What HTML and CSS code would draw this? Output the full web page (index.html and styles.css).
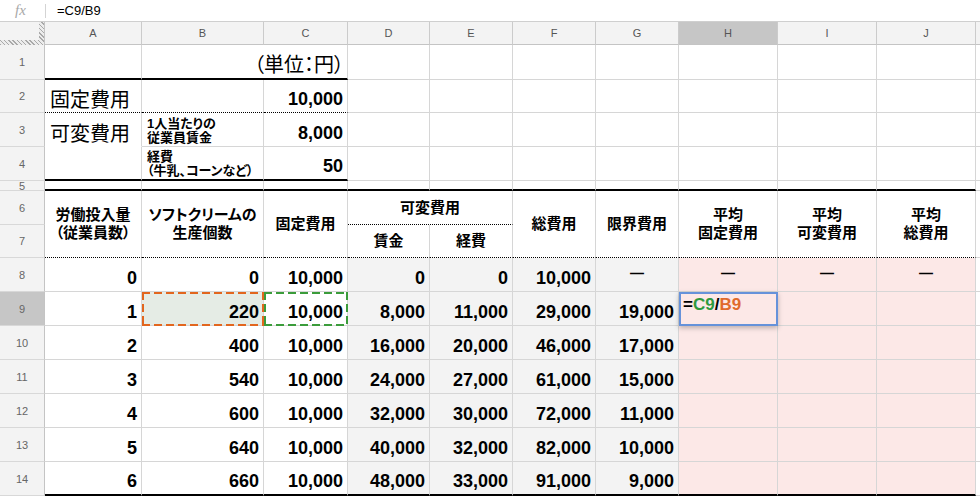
FILE: index.html
```html
<!DOCTYPE html>
<html lang="ja">
<head>
<meta charset="utf-8">
<title>Sheet</title>
<link rel="stylesheet" href="styles.css">
</head>
<body>
<div class="fbar"><span class="fx">fx</span><span class="fsep"></span><span class="ftext">=C9/B9</span></div>
<div class="sheet">
  <div class="corner"></div>
  <div class="ch">A</div><div class="ch">B</div><div class="ch">C</div><div class="ch">D</div><div class="ch">E</div><div class="ch">F</div><div class="ch">G</div><div class="ch sel">H</div><div class="ch">I</div><div class="ch">J</div><div class="ch k"></div>

  <div class="rh">1</div>
  <div class="c bk"></div>
  <div class="c bk cs2 unit">（単位：円）</div>
  <div class="c"></div><div class="c"></div><div class="c"></div><div class="c"></div><div class="c"></div><div class="c"></div><div class="c"></div><div class="c k"></div>

  <div class="rh">2</div>
  <div class="c dt big">固定費用</div>
  <div class="c dt"></div>
  <div class="c dt num">10,000</div>
  <div class="c"></div><div class="c"></div><div class="c"></div><div class="c"></div><div class="c"></div><div class="c"></div><div class="c"></div><div class="c k"></div>

  <div class="rh">3</div>
  <div class="c wb big">可変費用</div>
  <div class="c sm">1人当たりの<br>従業員賃金</div>
  <div class="c num">8,000</div>
  <div class="c"></div><div class="c"></div><div class="c"></div><div class="c"></div><div class="c"></div><div class="c"></div><div class="c"></div><div class="c k"></div>

  <div class="rh">4</div>
  <div class="c bk"></div>
  <div class="c bk sm">経費<br>（牛乳、コーンなど）</div>
  <div class="c bk num">50</div>
  <div class="c"></div><div class="c"></div><div class="c"></div><div class="c"></div><div class="c"></div><div class="c"></div><div class="c"></div><div class="c k"></div>

  <div class="rh r5">5</div>
  <div class="c bk"></div><div class="c bk"></div><div class="c bk"></div><div class="c bk"></div><div class="c bk"></div><div class="c bk"></div><div class="c bk"></div><div class="c bk"></div><div class="c bk"></div><div class="c bk"></div><div class="c k"></div>

  <div class="rh">6</div>
  <div class="c hd rs2 dt">労働投入量<br>（従業員数）</div>
  <div class="c hd rs2 dt">ソフトクリームの<br>生産個数</div>
  <div class="c hd rs2 dt">固定費用</div>
  <div class="c hd cs2 dt">可変費用</div>
  <div class="c hd rs2 dt">総費用</div>
  <div class="c hd rs2 dt">限界費用</div>
  <div class="c hd rs2 dt">平均<br>固定費用</div>
  <div class="c hd rs2 dt">平均<br>可変費用</div>
  <div class="c hd rs2 dt">平均<br>総費用</div>
  <div class="c k rs2"></div>

  <div class="rh">7</div>
  <div class="c hd dt">賃金</div>
  <div class="c hd dt">経費</div>

  <div class="rh">8</div>
  <div class="c num">0</div><div class="c num">0</div><div class="c num">10,000</div>
  <div class="c num g">0</div><div class="c num g">0</div><div class="c num g">10,000</div><div class="c dash g">—</div>
  <div class="c dash p">—</div><div class="c dash p">—</div><div class="c dash p">—</div><div class="c k"></div>

  <div class="rh sel">9</div>
  <div class="c num">1</div><div class="c num refb">220</div><div class="c num refc">10,000</div>
  <div class="c num g">8,000</div><div class="c num g">11,000</div><div class="c num g">29,000</div><div class="c num g">19,000</div>
  <div class="c p edit"><span>=</span><span class="fg">C9</span><span>/</span><span class="fo">B9</span></div><div class="c p"></div><div class="c p"></div><div class="c k"></div>

  <div class="rh">10</div>
  <div class="c num">2</div><div class="c num">400</div><div class="c num">10,000</div>
  <div class="c num g">16,000</div><div class="c num g">20,000</div><div class="c num g">46,000</div><div class="c num g">17,000</div>
  <div class="c p"></div><div class="c p"></div><div class="c p"></div><div class="c k"></div>

  <div class="rh">11</div>
  <div class="c num">3</div><div class="c num">540</div><div class="c num">10,000</div>
  <div class="c num g">24,000</div><div class="c num g">27,000</div><div class="c num g">61,000</div><div class="c num g">15,000</div>
  <div class="c p"></div><div class="c p"></div><div class="c p"></div><div class="c k"></div>

  <div class="rh">12</div>
  <div class="c num">4</div><div class="c num">600</div><div class="c num">10,000</div>
  <div class="c num g">32,000</div><div class="c num g">30,000</div><div class="c num g">72,000</div><div class="c num g">11,000</div>
  <div class="c p"></div><div class="c p"></div><div class="c p"></div><div class="c k"></div>

  <div class="rh">13</div>
  <div class="c num">5</div><div class="c num">640</div><div class="c num">10,000</div>
  <div class="c num g">40,000</div><div class="c num g">32,000</div><div class="c num g">82,000</div><div class="c num g">10,000</div>
  <div class="c p"></div><div class="c p"></div><div class="c p"></div><div class="c k"></div>

  <div class="rh">14</div>
  <div class="c num bk">6</div><div class="c num bk">660</div><div class="c num bk">10,000</div>
  <div class="c num g bk">48,000</div><div class="c num g bk">33,000</div><div class="c num g bk">91,000</div><div class="c num g bk">9,000</div>
  <div class="c p bk"></div><div class="c p bk"></div><div class="c p bk"></div><div class="c k"></div>
</div>
</body>
</html>
```

FILE: styles.css
```css
* { box-sizing: border-box; }
html, body { margin: 0; padding: 0; background: #fff; }
body {
  width: 980px;
  height: 498px;
  overflow: hidden;
  font-family: "Liberation Sans", Arial, "Noto Sans CJK JP", sans-serif;
  color: #000;
}

/* formula bar */
.fbar {
  height: 22px;
  display: flex;
  align-items: center;
  border-bottom: 1px solid #cfcfcf;
}
.fx {
  width: 45px;
  padding-left: 15px;
  font: italic 15px "Liberation Serif", serif;
  color: #a8a8a8;
}
.fsep { width: 1px; height: 14px; background: #d4d4d4; }
.ftext { margin-left: 11px; font-size: 13px; }

/* grid */
.sheet {
  display: grid;
  grid-template-columns: 45px 97px 122px 84px 82px 83px 83px 83px 99px 99px 99px 1fr;
  grid-template-rows: 23px 35px 33px 34px 34px 10px 34px 33px 34px 34px 34px 34px 34px 34px 34px;
}

.corner {
  background:
    linear-gradient(#f3f3f3, #f3f3f3) top left / calc(100% - 5px) calc(100% - 5px) no-repeat,
    repeating-linear-gradient(45deg, #a9a9a9 0 1px, #ececec 1px 3px);
  border-right: 1px solid #c4c4c4;
}

.ch {
  background: #f3f3f3;
  border-right: 1px solid #cbcbcb;
  border-bottom: 1px solid #c4c4c4;
  display: flex;
  align-items: center;
  justify-content: center;
  font-size: 11px;
  color: #555;
}
.ch.sel { background: #c6c6c6; }

.rh {
  background: #f3f3f3;
  border-right: 1px solid #c4c4c4;
  border-bottom: 1px solid #d8d8d8;
  display: flex;
  align-items: center;
  justify-content: center;
  font-size: 11px;
  color: #666;
  overflow: hidden;
}
.rh.sel { background: #c6c6c6; }
.rh.r5 { line-height: 10px; align-items: flex-start; }

.c {
  border-right: 1px solid #d6d6d6;
  border-bottom: 1px solid #d6d6d6;
  display: flex;
  align-items: flex-end;
  padding: 0 4px 2px 4px;
  background: #fff;
  min-width: 0;
  white-space: nowrap;
  font-feature-settings: "palt";
}
.k { border-right: none; }
.cs2 { grid-column: span 2; }
.rs2 { grid-row: span 2; }

.bk { border-bottom: 2px solid #000; }
.dt { border-bottom: 1px dotted #000; }
.wb { border-bottom-color: #fff; }

.g { background: #f3f3f3; }
.p { background: #fce8e7; }

.num {
  justify-content: flex-end;
  font-weight: bold;
  font-size: 18px;
  line-height: 20px;
  padding-bottom: 3px;
}

.unit {
  justify-content: flex-end;
  font-size: 20px;
  line-height: 24px;
  padding-bottom: 1px;
  padding-right: 3px;
}

.big {
  font-size: 20px;
  line-height: 24px;
  padding-left: 5px;
  padding-bottom: 0;
}

.sm {
  font-size: 13px;
  line-height: 14px;
  font-weight: bold;
  padding-left: 5px;
  padding-bottom: 1px;
}

.hd {
  justify-content: center;
  align-items: center;
  text-align: center;
  font-weight: bold;
  font-size: 15px;
  line-height: 18px;
  padding: 0 2px;
}

.dash {
  justify-content: center;
  align-items: center;
  font-weight: bold;
  font-size: 14px;
  padding-bottom: 3px;
}

/* referenced ranges */
.refb, .refc { position: relative; }
.refb { background: #e5ece5; }
.refb::after, .refc::after {
  content: "";
  position: absolute;
  top: 0;
  left: 0;
  right: -1px;
  bottom: -1px;
  pointer-events: none;
  background:
    repeating-linear-gradient(90deg, var(--dc) 0 8px, transparent 8px 12px) top left / 100% 2px no-repeat,
    repeating-linear-gradient(90deg, var(--dc) 0 8px, transparent 8px 12px) bottom left / 100% 2px no-repeat,
    repeating-linear-gradient(180deg, var(--dc) 0 8px, transparent 8px 12px) top left / 2px 100% no-repeat,
    repeating-linear-gradient(180deg, var(--dc) 0 8px, transparent 8px 12px) top right / 2px 100% no-repeat;
}
.refb::after { --dc: #e2661e; }
.refc::after { --dc: #3b9c3b; z-index: 1; }

/* in-cell editor */
.edit {
  position: relative;
  z-index: 2;
  border: 2px solid #6692da;
  box-shadow: 0 2px 5px rgba(0, 0, 0, 0.25);
  align-items: flex-start;
  padding: 2px 2px;
  font-weight: bold;
  font-size: 17px;
  line-height: 18px;
}
.fg { color: #2f9a3e; }
.fo { color: #e06a2c; }
```
